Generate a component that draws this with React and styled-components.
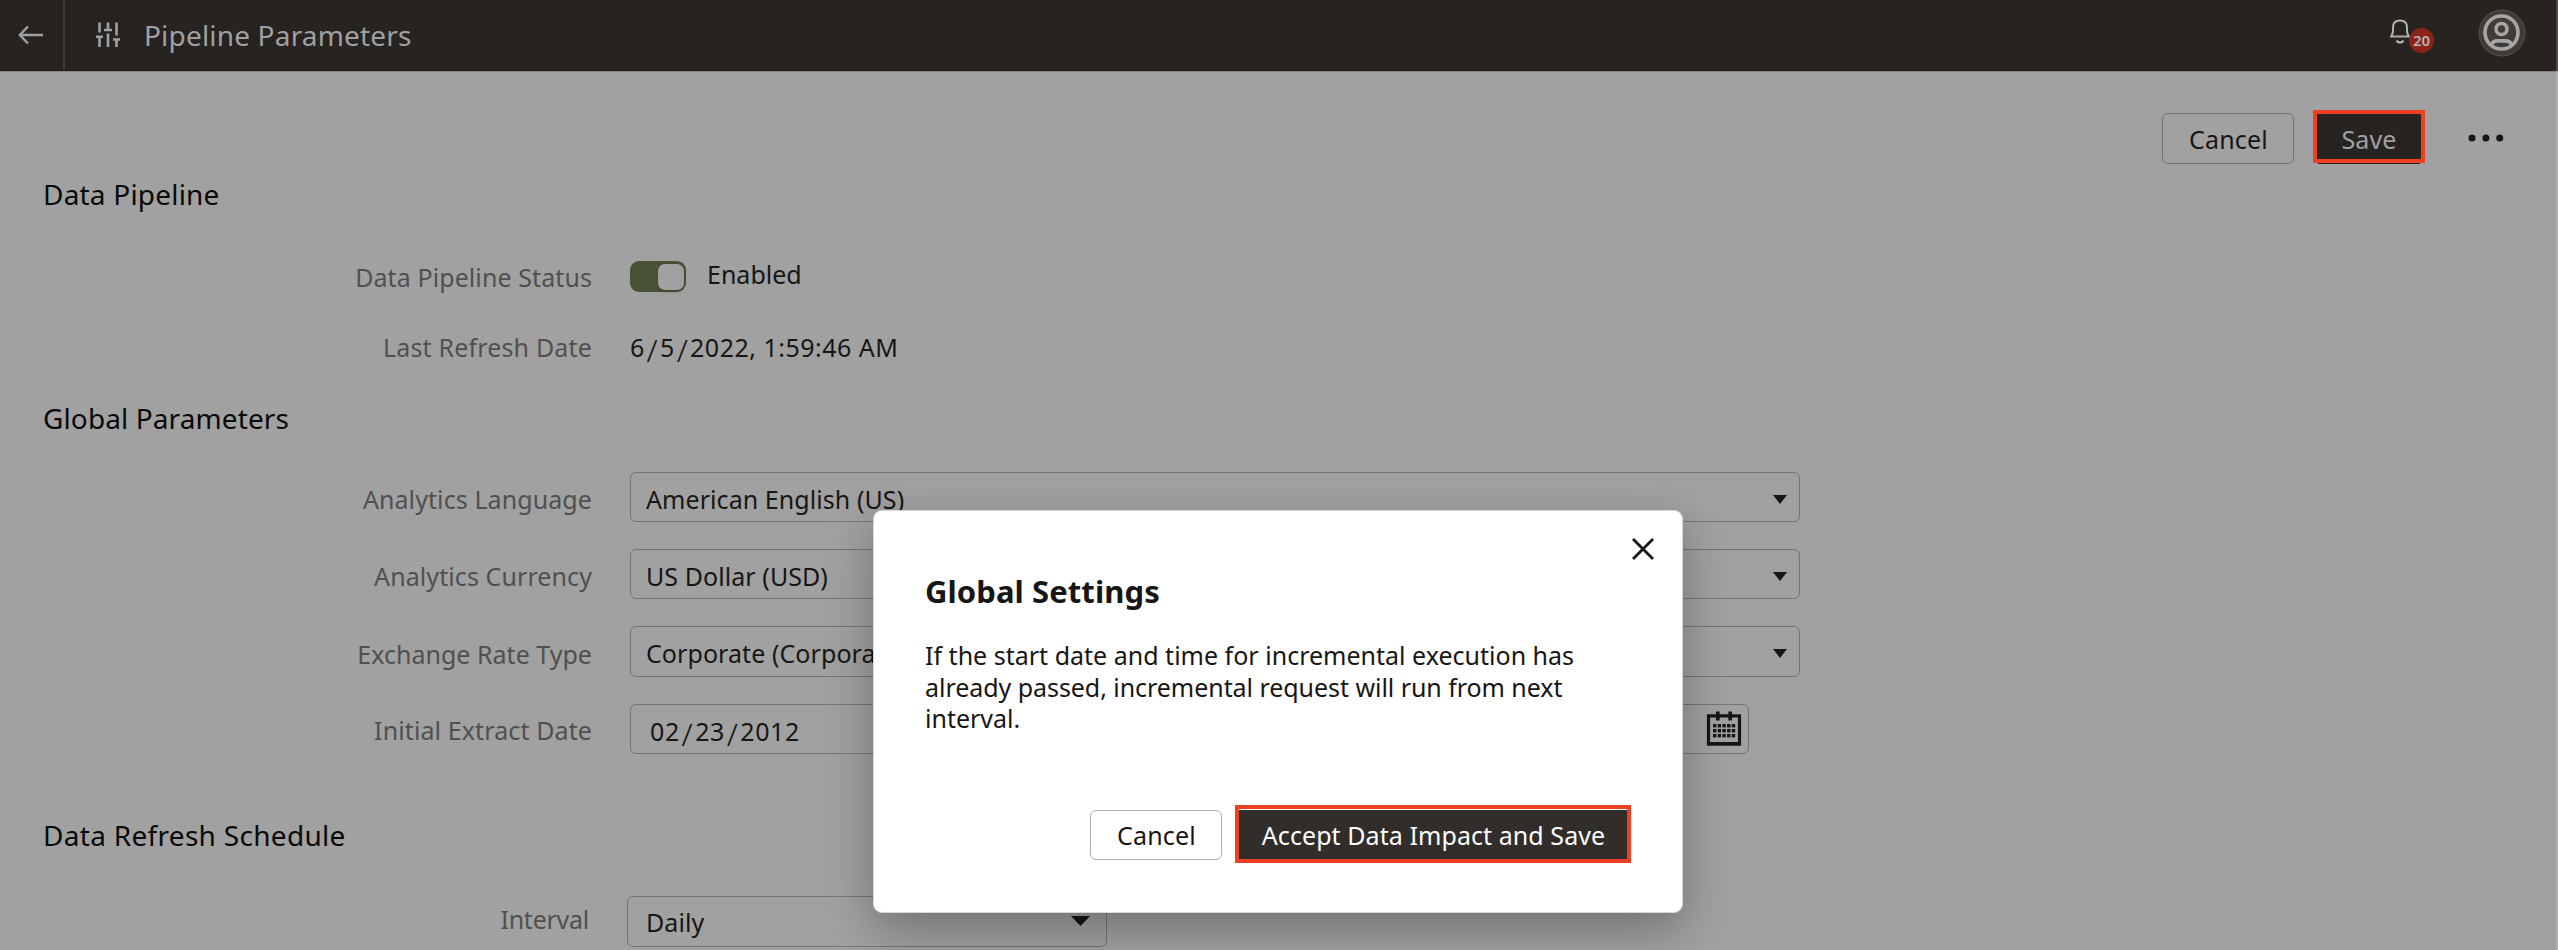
import React from 'react';
import styled, { createGlobalStyle } from 'styled-components';

const GlobalStyle = createGlobalStyle`
  *, *::before, *::after { box-sizing: border-box; }
  html, body { margin: 0; height: 100%; overflow: hidden; }
  body {
    background: #a1a1a1;
    color: #171615;
    font: 400 25px/32px "Noto Sans", "Open Sans", sans-serif;
  }
`;

const Page = styled.div`
  height: 950px;
  overflow: hidden;
  position: relative;
`;

const Header = styled.header`
  display: flex;
  height: 72px;
  background: #272320;
  border-bottom: 1px solid #8b8382;
  color: #a0a0a0;
`;

const BackButton = styled.button`
  width: 65px;
  height: 70px;
  padding: 0 2px 0 0;
  border: 0;
  border-right: 2px solid #3c3938;
  background: none;
  color: inherit;
  display: flex;
  align-items: center;
  justify-content: center;
`;

const HeaderTitle = styled.h1`
  margin: 0 auto 0 23px;
  padding-top: 15px;
  font-size: 28px;
  font-weight: 400;
  line-height: 41px;
  letter-spacing: 0.18px;
`;

const SlidersIcon = styled.svg`
  margin: 20px 0 0 30px;
`;

const Notifications = styled.div`
  display: flex;
  margin-right: 44px;
  padding-top: 18px;
`;

const Badge = styled.span`
  width: 25px;
  height: 25px;
  margin: 10px 0 0 -2px;
  border-radius: 50%;
  background: #8b231b;
  color: #b4b2b1;
  font-size: 15px;
  font-weight: 600;
  line-height: 25px;
  text-align: center;
`;

const Avatar = styled.svg`
  margin: 9px 32px 0 0;
`;

const Actions = styled.div`
  display: flex;
  justify-content: flex-end;
  align-items: flex-start;
  height: 92px;
  padding: 38px 54px 0 0;
`;

const Button = styled.button`
  width: ${p => p.$width}px;
  height: ${p => p.$height || 51}px;
  margin: ${p => p.$margin || 0};
  padding: 1px 0 0 1px;
  border: 1px solid ${p => p.$border};
  border-radius: 6px;
  background: ${p => p.$fill || 'none'};
  color: ${p => p.$color || '#171615'};
  font: inherit;
  letter-spacing: ${p => p.$spacing || 0.2}px;
  white-space: nowrap;
`;

const SaveHighlight = styled.div`
  width: 112px;
  height: 53px;
  border: 4px solid #ee4123;
  box-shadow: 0 6px 0 -5px #272320;
  background: #272320;
  color: #a1a1a1;
  display: flex;
  justify-content: center;
`;

const SaveButton = styled(Button)`
  border: 0;
  padding: 4px 0 0;
`;

const MoreIcon = styled.svg`
  margin: 20px 0 0 43px;
`;

const Section = styled.section`
  margin-top: ${p => p.$top}px;
`;

const SectionTitle = styled.h2`
  margin: 0 0 ${p => p.$gap}px 43px;
  color: #090909;
  font-size: 28px;
  font-weight: 400;
  line-height: 40px;
  letter-spacing: ${p => p.$spacing}px;
`;

const Row = styled.div`
  display: flex;
  align-items: flex-start;
  margin-bottom: ${p => p.$gap || 0}px;
`;

const Label = styled.label`
  width: ${p => p.$width || 592}px;
  margin-right: 38px;
  padding-top: ${p => p.$top || 0}px;
  color: #505050;
  letter-spacing: ${p => (p.$spacing ?? 0.09)}px;
  text-align: right;
`;

const Value = styled.div`
  letter-spacing: ${p => p.$spacing || 0}px;
  margin-left: ${p => p.$left || 0}px;
`;

const Slash = styled.span`
  margin: 0 1.8px;
  font-size: 32px;
  font-weight: 300;
  line-height: 0;
  vertical-align: -4.5px;
`;

const Toggle = styled.div`
  display: flex;
  justify-content: flex-end;
  width: 56px;
  height: 31px;
  margin-top: 3px;
  padding: 2.5px;
  border-radius: 9px;
  background: #475237;
`;

const Knob = styled.div`
  width: 26px;
  border-radius: 7px;
  background: #a1a1a1;
  box-shadow: 0 2px 3px rgba(0, 0, 0, 0.15);
`;

const Field = styled.div`
  display: flex;
  align-items: flex-start;
  width: ${p => p.$width || 1170}px;
  height: ${p => p.$height || 50}px;
  padding: ${p => p.$pad || '10px 12px 0 15px'};
  border: 1px solid #757575;
  border-radius: 6px;
`;

const FieldText = styled.span`
  margin-right: auto;
  letter-spacing: ${p => p.$spacing || 0.07}px;
`;

const DateText = styled.span`
  margin-right: auto;
  padding-top: 4px;
  letter-spacing: 0.6px;
`;

const Caret = styled.svg`
  margin-top: ${p => p.$top || 12}px;
`;

const Dialog = styled.div`
  position: absolute;
  left: 873px;
  top: 510px;
  width: 810px;
  height: 403px;
  padding: 27px 28px 0 51px;
  border: 1px solid #d8d8d8;
  border-radius: 9px;
  background: #fff;
  box-shadow: 0 16px 48px rgba(0, 0, 0, 0.3);
  color: #171615;
`;

const CloseIcon = styled.svg`
  display: block;
  margin-left: auto;
`;

const DialogTitle = styled.h3`
  margin: 11px 0 0;
  font-size: 31px;
  font-weight: 700;
  line-height: 40px;
  letter-spacing: 0.08px;
`;

const DialogText = styled.p`
  margin: 29px 0 0;
  line-height: 31.5px;
`;

const Line = styled.span`
  display: block;
  letter-spacing: ${p => p.$spacing}px;
  white-space: nowrap;
`;

const DialogActions = styled.div`
  display: flex;
  justify-content: flex-end;
  margin: 70px 23px 0 0;
`;

const AcceptHighlight = styled.div`
  width: 396px;
  height: 58px;
  margin-left: 13px;
  padding-top: 1px;
  border: 4px solid #ee4123;
`;

const AcceptButton = styled(Button)`
  border: 0;
  border-radius: 0;
  padding-top: 2px;
`;

const EdgeStrip = styled.div`
  position: absolute;
  top: 0;
  right: 0;
  width: 2px;
  height: 100%;
  background: rgba(255, 255, 255, 0.17);
`;

const DownCaret = ({ top, w = 14, h = 9 }) => (
  <Caret $top={top} width={w} height={h} viewBox="0 0 14 9" preserveAspectRatio="none">
    <path d="M0 0h14L7 9z" fill="#171615" />
  </Caret>
);

const CalendarIcon = () => (
  <svg width="36" height="36" viewBox="0 0 36 36">
    <path d="M2.5 4.8h31v28h-31z" fill="none" stroke="#171615" strokeWidth="3.2" />
    <path d="M1 31h34v3.6H1zM10 .5h3.6v9H10zM22.4 .5h3.6v9h-3.6z" fill="#171615" />
    {[13, 18, 23].map(y =>
      [7, 11.7, 16.4, 21.1, 25.8].map(x => (
        <rect key={`${x}-${y}`} x={x} y={y} width="3.4" height="3.4" fill="#171615" />
      ))
    )}
  </svg>
);

const parameters = [
  { label: 'Analytics Language', value: 'American English (US)' },
  { label: 'Analytics Currency', value: 'US Dollar (USD)' },
  { label: 'Exchange Rate Type', value: 'Corporate (Corporate)', height: 51, top: 12, spacing: 0.02 },
];

export default function App() {
  return (
    <Page>
      <GlobalStyle />
      <Header>
        <BackButton aria-label="Back">
          <svg width="26" height="20" viewBox="0 0 26 20" fill="none" stroke="#a0a0a0" strokeWidth="2.4">
            <path d="M10 1.5L1.8 10l8.2 8.5M2 10h23" />
          </svg>
        </BackButton>
        <SlidersIcon width="26" height="29" viewBox="0 0 26 29" fill="none" stroke="#a0a0a0" strokeWidth="2.6">
          <path d="M4.5 2.5v10M1 16.8h7M4.5 17v10M13 2.5v8M9 10h8M13 13.5v13.5M21.5 2.5v13M18 19.5h7M21.5 19.5v7.5" />
        </SlidersIcon>
        <HeaderTitle>Pipeline Parameters</HeaderTitle>
        <Notifications>
          <svg width="21" height="27" viewBox="0 0 21 27" fill="none" stroke="#b0afae" strokeWidth="2">
            <path d="M0 18.5h20M2 18V16.5C3.4 15 3 12 3 9.5C3 5 5.8 2.5 10 2.5S17 5 17 9.5C17 12 16.6 15 18 16.5V18" />
            <path d="M6.5 22.5c1.5 2.6 5.5 2.6 7 0" strokeWidth="2.4" />
          </svg>
          <Badge>20</Badge>
        </Notifications>
        <Avatar width="48" height="48" viewBox="0 0 48 48" fill="none">
          <circle cx="24" cy="24" r="23" fill="#3f3b39" stroke="#55514f" />
          <circle cx="23.5" cy="23.5" r="16.5" stroke="#a6a5a4" strokeWidth="3.6" />
          <circle cx="23.5" cy="20" r="5.5" stroke="#a6a5a4" strokeWidth="3.6" />
          <path d="M13.5 35.5c1-2.6 3.2-3.6 6-3.6h8c2.8 0 5 1 6 3.6" stroke="#a6a5a4" strokeWidth="3.6" />
        </Avatar>
      </Header>

      <Actions>
        <Button $width={132} $margin="3px 19px 0 0" $border="#757575">Cancel</Button>
        <SaveHighlight>
          <SaveButton $width={104} $height={45} $color="#a1a1a1" $spacing={0.12}>Save</SaveButton>
        </SaveHighlight>
        <MoreIcon width="36" height="16" viewBox="0 0 36 16" fill="#171615">
          <circle cx="4" cy="8" r="3.5" />
          <circle cx="17.9" cy="8" r="3.5" />
          <circle cx="31.7" cy="8" r="3.5" />
        </MoreIcon>
      </Actions>

      <Section $top={10}>
        <SectionTitle $gap={44} $spacing={0.2}>Data Pipeline</SectionTitle>
        <Row $gap={38}>
          <Label $top={3}>Data Pipeline Status</Label>
          <Toggle><Knob /></Toggle>
          <Value $left={21}>Enabled</Value>
        </Row>
        <Row>
          <Label $spacing={0.17}>Last Refresh Date</Label>
          <Value $spacing={0.5}>6<Slash>/</Slash>5<Slash>/</Slash>2022, 1:59:46 AM</Value>
        </Row>
      </Section>

      <Section $top={35}>
        <SectionTitle $gap={34} $spacing={0.11}>Global Parameters</SectionTitle>
        {parameters.map(p => (
          <Row key={p.label} $gap={27}>
            <Label $top={p.top || 11} $spacing={p.spacing}>{p.label}</Label>
            <Field $height={p.height}>
              <FieldText>{p.value}</FieldText>
              <DownCaret />
            </Field>
          </Row>
        ))}
        <Row>
          <Label $top={10} $spacing={0.11}>Initial Extract Date</Label>
          <Field $width={1119} $pad="6px 6px 0 19px">
            <DateText>02<Slash>/</Slash>23<Slash>/</Slash>2012</DateText>
            <CalendarIcon />
          </Field>
        </Row>
      </Section>

      <Section $top={61}>
        <SectionTitle $gap={41} $spacing={0.3}>Data Refresh Schedule</SectionTitle>
        <Row>
          <Label $width={589} $top={7} $spacing={-0.25}>Interval</Label>
          <Field $width={480} $height={51} $pad="9px 16px 0 18px">
            <FieldText>Daily</FieldText>
            <DownCaret top={10} w={19} h={10} />
          </Field>
        </Row>
      </Section>

      <EdgeStrip />

      <Dialog role="dialog">
        <CloseIcon width="22" height="22" viewBox="0 0 22 22" stroke="#171615" strokeWidth="2.8">
          <path d="M1 1l20 20M21 1L1 21" />
        </CloseIcon>
        <DialogTitle>Global Settings</DialogTitle>
        <DialogText>
          <Line $spacing={0.01}>If the start date and time for incremental execution has</Line>
          <Line $spacing={-0.05}>already passed, incremental request will run from next</Line>
          <Line $spacing={0}>interval.</Line>
        </DialogText>
        <DialogActions>
          <Button $width={132} $height={50} $margin="5px 0 0" $border="#b0b0b0">Cancel</Button>
          <AcceptHighlight>
            <AcceptButton $width={388} $height={49} $fill="#312d2a" $color="#fff" $spacing={0.07}>
              Accept Data Impact and Save
            </AcceptButton>
          </AcceptHighlight>
        </DialogActions>
      </Dialog>
    </Page>
  );
}
